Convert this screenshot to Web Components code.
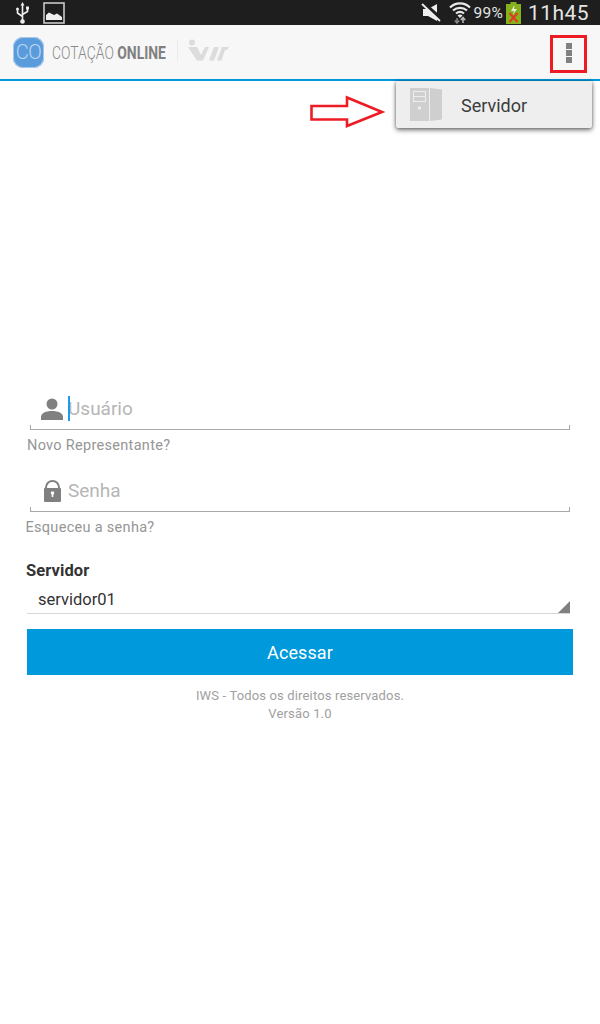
<!DOCTYPE html>
<html lang="pt">
<head>
<meta charset="utf-8">
<title>Cotação Online</title>
<style>
  html, body { margin: 0; padding: 0; background: #fff; }
  body { width: 600px; height: 1024px; overflow: hidden; position: relative; font-family: Roboto, "Liberation Sans", sans-serif; }
</style>
</head>
<body>
<status-bar></status-bar>
<app-bar></app-bar>
<overflow-menu>Servidor</overflow-menu>
<login-form>
  <text-field placeholder="Usuário" icon="user" focused>Novo Representante?</text-field>
  <text-field placeholder="Senha" icon="lock" shift="-1.5">Esqueceu a senha?</text-field>
  <server-select label="Servidor" value="servidor01"></server-select>
  <login-button>Acessar</login-button>
  <page-footer>
    <div>IWS - Todos os direitos reservados.</div>
    <div>Versão 1.0</div>
  </page-footer>
</login-form>

<script>
class StatusBar extends HTMLElement {
  constructor() {
    super();
    this.attachShadow({mode: 'open'}).innerHTML = `<style>
      :host { display: flex; align-items: center; height: 25px; background: #1e1e1e; color: #e4e4e4; padding: 0 11px 0 15px; box-sizing: border-box; }
      .left { display: flex; align-items: center; gap: 13px; flex: 1; }
      .right { display: flex; align-items: center; }
      .pct { font-size: 15.5px; margin-left: 3px; letter-spacing: .2px; }
      .time { font-size: 21px; margin-left: 7px; letter-spacing: .45px; }
      svg { display: block; }
    </style>
    <div class="left">
      <svg width="15" height="22" viewBox="0 0 15 22" fill="none" stroke="#eee" stroke-width="1.6">
        <path d="M7.5 3V18M7.5 14.5 2.5 11V8M7.5 12.5 12.5 9.5V7"/>
        <path d="M7.5 0 5.5 3.5H9.5Z" fill="#eee" stroke="none"/>
        <circle cx="7.5" cy="19.5" r="2.3" fill="#eee" stroke="none"/>
        <circle cx="2.5" cy="7" r="1.5" fill="#eee" stroke="none"/>
        <rect x="11" y="4.5" width="3" height="3" fill="#eee" stroke="none"/>
      </svg>
      <svg width="22" height="22" viewBox="0 0 22 22">
        <rect x="1" y="1" width="20" height="20" fill="none" stroke="#c8c8c8" stroke-width="1.6"/>
        <path d="M3 18V13L6 10.5 9 12 11 13 14 11.5 19 15V18Z" fill="#eee"/>
      </svg>
    </div>
    <div class="right">
      <svg width="20" height="20" viewBox="0 0 20 20" style="margin-right:8px">
        <path d="M2 6H7L16 1V18L7 13H2Z" fill="#eee"/>
        <path d="M2 0 20 16" stroke="#1e1e1e" stroke-width="4"/>
        <path d="M1 1 19 18" stroke="#eee" stroke-width="1.800"/>
      </svg>
      <svg width="22" height="23" viewBox="0 0 22 23" fill="none" stroke="#e8e8e8" stroke-width="2.200">
        <path d="M1 6.500C6.500 1 15.500 1 21 6.500"/>
        <path d="M4 9.500C8 6 14 6 18 9.500"/>
        <path d="M7 12.500C9.500 10.500 12.500 10.500 15 12.500"/>
        <path d="M11 17 8.500 14.500C10 13.300 12 13.300 13.500 14.500Z" fill="#e8e8e8" stroke="none"/>
        <path d="M8 17V22M5.800 19.500 8 22 10.200 19.500" stroke="#888" stroke-width="1.500"/>
        <path d="M14 22V16.500M11.800 19 14 16.500 16.200 19" stroke="#bbb" stroke-width="1.500"/>
      </svg>
      <span class="pct">99%</span>
      <svg width="15" height="22" viewBox="0 0 15 22" style="margin-left:3px">
        <rect x="4.500" y="0" width="6" height="2" fill="#86b01e"/>
        <rect x="0" y="2" width="15" height="20" fill="#86b01e"/>
        <path d="M8.500 3 5 9H8L6.500 13 11 7H8Z" fill="#e8f0d0"/>
        <path d="M3.500 11 11.500 20M11.500 11 3.500 20" stroke="#e03a20" stroke-width="2"/>
      </svg>
      <span class="time">11h45</span>
    </div>`;
  }
}

class AppBar extends HTMLElement {
  constructor() {
    super();
    this.attachShadow({mode: 'open'}).innerHTML = `<style>
      :host { display: flex; align-items: center; height: 56px; background: #f7f7f7; border-bottom: 2px solid #0099db; box-sizing: border-box; padding: 0 13px; position: relative; }
      .logo { width: 31px; height: 31px; border-radius: 10px; background: #5a9bdc; box-shadow: 0 0 0 1px #a8c8e8 inset; color: #b9d6f2; font-size: 20px; font-weight: 300; display: flex; align-items: center; justify-content: center; letter-spacing: -.5px; }
      .brand { width: 115px; margin-left: 8px; font-size: 19px; color: #8a8a8a; font-weight: 300; white-space: nowrap; transform: scaleX(.733); transform-origin: left center; }
      .brand b { font-weight: 700; color: #808080; }
      .sep { width: 1px; height: 20px; background: #eaeaea; margin: -3px 0 0 10px; }
      .iws { margin: -5px 0 0 10px; display: block; }
      .more { position: absolute; left: 550px; top: 10px; width: 37px; height: 38px; border: 3px solid #ed1c24; box-sizing: border-box; padding-bottom: 2px; display: flex; flex-direction: column; align-items: center; justify-content: center; gap: 1px; }
      .more i { width: 6px; height: 6px; background: #808080; display: block; }
    </style>
    <div class="logo">CO</div>
    <div class="brand">COTAÇÃO <b>ONLINE</b></div>
    <div class="sep"></div>
    <svg class="iws" width="42" height="22" viewBox="0 0 42 22" fill="#dcdcdc">
      <circle cx="4" cy="3.500" r="3"/>
      <path d="M0 8H9L13 16 17 8H21L15 21.500H9ZM21 21.500 26 8H31L26 21.500ZM29 21.500 34 8H41L39 11H37L33.500 21.500Z"/>
    </svg>
    <div class="more"><i></i><i></i><i></i></div>`;
  }
}

class OverflowMenu extends HTMLElement {
  constructor() {
    super();
    this.attachShadow({mode: 'open'}).innerHTML = `<style>
      :host { position: absolute; left: 396px; top: 81px; width: 196px; height: 47px; background: #eeeeee; border-radius: 0 0 2px 2px; box-shadow: 0 2px 5px rgba(0,0,0,.55), 0 0 3px rgba(0,0,0,.3); display: flex; align-items: center; color: #3c3c3c; font-size: 18px; }
      .srv { margin: 0 19px 0 14px; display: block; }
      .txt { margin-top: 2px; }
      .arrow { position: absolute; left: -86px; top: 14px; display: block; }
    </style>
    <svg class="srv" width="32" height="33" viewBox="0 0 32 33">
      <path d="M0 0H19V33H0Z" fill="#cfcfcf"/>
      <path d="M20 0 32 1.500V31.500L20 33Z" fill="#cfcfcf"/>
      <rect x="3.500" y="3.500" width="12" height="5" fill="none" stroke="#eee" stroke-width="1"/>
      <rect x="3.500" y="8.500" width="12" height="5" fill="none" stroke="#eee" stroke-width="1"/>
      <rect x="8" y="18.500" width="3" height="3" fill="#eee"/>
    </svg>
    <span class="txt"><slot></slot></span>
    <svg class="arrow" width="78" height="35" viewBox="0 0 78 35">
      <path d="M1.500 11H37V2.500L72 17 37 31V24.500H1.500Z" fill="#fff" stroke="#ed1c24" stroke-width="2.600"/>
    </svg>`;
  }
}

class LoginForm extends HTMLElement {
  constructor() {
    super();
    this.attachShadow({mode: 'open'}).innerHTML = `<style>
      :host { display: flex; flex-direction: column; padding: 311px 27px 0; }
    </style><slot></slot>`;
  }
}

const ICONS = {
  user: `<svg width="22" height="22" viewBox="0 0 22 22" fill="#808080"><circle cx="11" cy="6" r="5.500"/><path d="M0 22V19C0 15 5 13 11 13S22 15 22 19V22Z"/></svg>`,
  lock: `<svg width="17" height="22" viewBox="0 0 17 22"><path d="M2 10V7.500C2 3.500 5 1 8.500 1S15 3.500 15 7.500V10" fill="none" stroke="#808080" stroke-width="2"/><rect x="0" y="8" width="17" height="14" rx="1" fill="#808080"/><circle cx="8.500" cy="13" r="1.800" fill="#fff"/><rect x="7.700" y="13" width="1.600" height="4" fill="#fff"/></svg>`
};

class TextField extends HTMLElement {
  constructor() {
    super();
    const focused = this.hasAttribute('focused');
    const icon = ICONS[this.getAttribute('icon')];
    this.attachShadow({mode: 'open'}).innerHTML = `<style>
      :host { display: block; height: 82px; }
      .row { display: flex; align-items: center; height: 38px; padding-bottom: 4px; margin-left: 3px; width: 540px; box-sizing: border-box; position: relative; border-bottom: 1px solid #a8a8a8; }
      .row::before, .row::after { content: ''; position: absolute; bottom: 0; width: 1px; height: 4px; background: #a8a8a8; }
      .row::before { left: 0; } .row::after { right: 0; }
      .ic { width: 24px; margin-left: 10px; margin-right: 4px; display: flex; justify-content: center; }
      .ph { font-size: 19px; color: #b6b6b6; position: relative; }
      .caret { position: absolute; left: 0; top: -1px; width: 2px; height: 25px; background: #1e9be8; }
      .help { font-size: 14.500px; color: #969696; padding-top: 7px; letter-spacing: .3px; margin-left: ${this.getAttribute('shift') || 0}px; }
      svg { display: block; }
    </style>
    <div class="row"><span class="ic">${icon}</span><span class="ph">${this.getAttribute('placeholder')}${focused ? '<span class="caret"></span>' : ''}</span></div>
    <div class="help"><slot></slot></div>`;
  }
}

class ServerSelect extends HTMLElement {
  constructor() {
    super();
    this.attachShadow({mode: 'open'}).innerHTML = `<style>
      :host { display: block; padding-top: 4px; }
      .label { font-size: 16.500px; font-weight: 700; color: #333; height: 21px; line-height: 21px; letter-spacing: .1px; margin-left: -1px; }
      .val { height: 33px; width: 543px; box-sizing: border-box; border-bottom: 1px solid #d6d6d6; padding: 9px 0 0 11px; font-size: 16.500px; color: #333; position: relative; line-height: 20px; }
      .tri { position: absolute; right: 0; bottom: 0; width: 0; height: 0; border-left: 12px solid transparent; border-bottom: 12px solid #808080; }
    </style>
    <div class="label">${this.getAttribute('label')}</div>
    <div class="val">${this.getAttribute('value')}<span class="tri"></span></div>`;
  }
}

class LoginButton extends HTMLElement {
  constructor() {
    super();
    this.attachShadow({mode: 'open'}).innerHTML = `<style>
      :host { display: flex; align-items: center; justify-content: center; height: 46px; margin-top: 15px; background: #0099db; color: #fff; font-size: 18px; letter-spacing: .1px; }
    </style><slot></slot>`;
  }
}

class PageFooter extends HTMLElement {
  constructor() {
    super();
    this.attachShadow({mode: 'open'}).innerHTML = `<style>
      :host { display: block; text-align: center; font-size: 13px; line-height: 18px; color: #a0a0a0; padding-top: 12px; letter-spacing: .15px; }
    </style><slot></slot>`;
  }
}

customElements.define('status-bar', StatusBar);
customElements.define('app-bar', AppBar);
customElements.define('overflow-menu', OverflowMenu);
customElements.define('login-form', LoginForm);
customElements.define('text-field', TextField);
customElements.define('server-select', ServerSelect);
customElements.define('login-button', LoginButton);
customElements.define('page-footer', PageFooter);
</script>
</body>
</html>
